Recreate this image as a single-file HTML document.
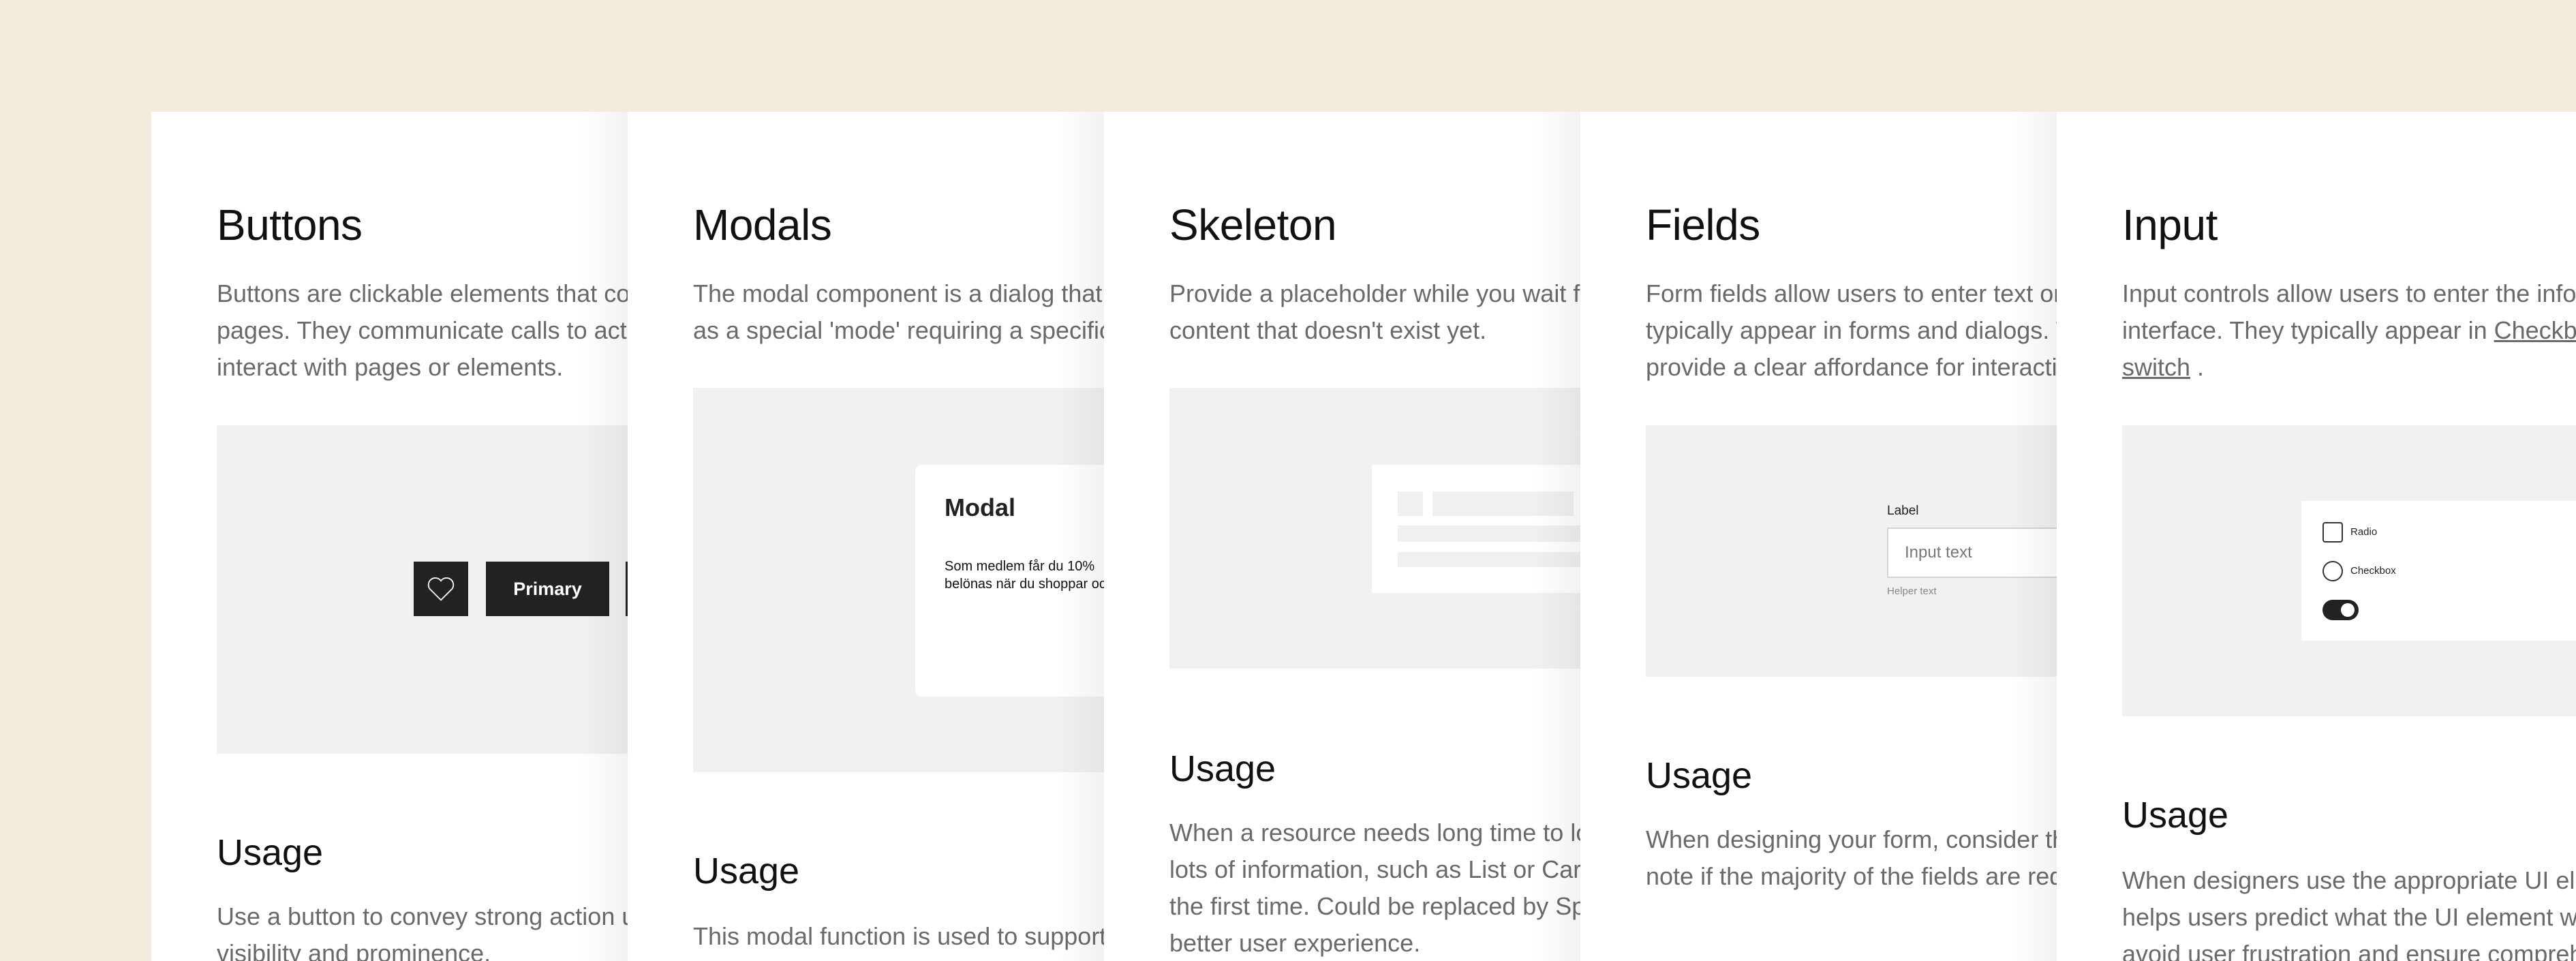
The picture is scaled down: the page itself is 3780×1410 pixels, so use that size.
<!DOCTYPE html>
<html style="overflow:hidden;width:3780px;height:1410px"><head><meta charset="utf-8"><style>
*{margin:0;padding:0;box-sizing:border-box}
body{width:3780px;height:1410px;background:#f3ebdb;overflow:hidden;position:relative;font-family:"Liberation Sans",sans-serif}
.card{position:absolute;top:164px;width:1100px;height:1246px;background:#fff}
.clip{position:absolute;inset:0;overflow:hidden}
.sh{position:absolute;left:-70px;top:0;width:70px;height:1246px;background:linear-gradient(to left,rgba(0,0,0,0.05),rgba(0,0,0,0))}
.t{position:absolute;left:96px;top:126px;font-size:64px;line-height:80px;color:#111;white-space:nowrap;letter-spacing:-0.5px}
.b{position:absolute;left:96px;font-size:36px;line-height:54px;color:#6a6a6a;white-space:nowrap}
.u{position:absolute;left:96px;font-size:54px;line-height:70px;color:#111;white-space:nowrap}
.g{position:absolute;left:96px;width:1100px;background:#f1f1f1;overflow:hidden}
.a{position:absolute}
</style></head><body>

<div class="card" style="left:222px;z-index:1"><div class="clip">
<div class="t">Buttons</div>
<div class="b" style="top:240px">Buttons are clickable elements that communicate<br>pages. They communicate calls to action<br>interact with pages or elements.</div>
<div class="g" style="top:460px;height:482px">
 <div class="a" style="left:289px;top:200px;width:80px;height:80px;background:#222;display:flex;align-items:center;justify-content:center">
  <svg width="44" height="40" viewBox="0 0 24 22"><path d="M12 20 L3 11 A5 5 0 0 1 12 4.5 A5 5 0 0 1 21 11 Z" fill="none" stroke="#fff" stroke-width="1"/></svg></div>
 <div class="a" style="left:395px;top:200px;width:181px;height:80px;background:#222;color:#fff;font-weight:bold;font-size:27px;line-height:80px;text-align:center">Primary</div>
 <div class="a" style="left:600px;top:200px;width:181px;height:80px;background:#222"></div>
</div>
<div class="u" style="top:1052px">Usage</div>
<div class="b" style="top:1154px">Use a button to convey strong action usage<br>visibility and prominence.</div>
</div></div>

<div class="card" style="left:921px;z-index:2"><div class="sh"></div><div class="clip">
<div class="t">Modals</div>
<div class="b" style="top:240px">The modal component is a dialog that<br>as a special 'mode' requiring a specific</div>
<div class="g" style="top:405px;height:564px">
 <div class="a" style="left:326px;top:113px;width:800px;height:340px;background:#fff;border-radius:10px">
  <div class="a" style="left:43px;top:40px;font-size:36px;font-weight:bold;color:#222;line-height:46px">Modal</div>
  <div class="a" style="left:43px;top:136px;font-size:20px;line-height:26px;color:#111;white-space:nowrap">Som medlem får du 10%<br>belönas när du shoppar och</div>
 </div>
</div>
<div class="u" style="top:1079px">Usage</div>
<div class="b" style="top:1183px">This modal function is used to support</div>
</div></div>

<div class="card" style="left:1620px;z-index:3"><div class="sh"></div><div class="clip">
<div class="t">Skeleton</div>
<div class="b" style="top:240px">Provide a placeholder while you wait for<br>content that doesn't exist yet.</div>
<div class="g" style="top:405px;height:412px">
 <div class="a" style="left:297px;top:113px;width:800px;height:188px;background:#fff">
  <div class="a" style="left:38px;top:39px;width:37px;height:36px;background:#f0f0f0"></div>
  <div class="a" style="left:89px;top:39px;width:207px;height:36px;background:#f0f0f0"></div>
  <div class="a" style="left:38px;top:89px;width:800px;height:24px;background:#f0f0f0"></div>
  <div class="a" style="left:38px;top:128px;width:800px;height:22px;background:#f0f0f0"></div>
 </div>
</div>
<div class="u" style="top:929px">Usage</div>
<div class="b" style="top:1031px">When a resource needs long time to load<br>lots of information, such as List or Card<br>the first time. Could be replaced by Spinner<br>better user experience.</div>
</div></div>

<div class="card" style="left:2319px;z-index:4"><div class="sh"></div><div class="clip">
<div class="t">Fields</div>
<div class="b" style="top:240px">Form fields allow users to enter text or<br>typically appear in forms and dialogs. They<br>provide a clear affordance for interaction</div>
<div class="g" style="top:460px;height:369px">
 <div class="a" style="left:354px;top:114px;font-size:19px;line-height:24px;color:#222">Label</div>
 <div class="a" style="left:354px;top:150px;width:600px;height:74px;background:#fff;border:2px solid #d4d4d4">
  <div class="a" style="left:24px;top:0;font-size:24px;line-height:70px;color:#777">Input text</div></div>
 <div class="a" style="left:354px;top:234px;font-size:15px;line-height:20px;color:#888">Helper text</div>
</div>
<div class="u" style="top:939px">Usage</div>
<div class="b" style="top:1041px">When designing your form, consider the<br>note if the majority of the fields are required</div>
</div></div>

<div class="card" style="left:3018px;z-index:5;width:762px"><div class="sh"></div><div class="clip">
<div class="t">Input</div>
<div class="b" style="top:240px">Input controls allow users to enter the information<br>interface. They typically appear in <span style="text-decoration:underline">Checkbox</span><br><span style="text-decoration:underline">switch</span> .</div>
<div class="g" style="top:460px;height:427px">
 <div class="a" style="left:263px;top:111px;width:800px;height:205px;background:#fff">
  <div class="a" style="left:31px;top:31px;width:30px;height:30px;border:2px solid #333;border-radius:4px"></div>
  <div class="a" style="left:72px;top:34px;font-size:15px;line-height:24px;color:#222">Radio</div>
  <div class="a" style="left:31px;top:88px;width:30px;height:30px;border:2px solid #333;border-radius:50%"></div>
  <div class="a" style="left:72px;top:91px;font-size:15px;line-height:24px;color:#222">Checkbox</div>
  <div class="a" style="left:31px;top:145px;width:53px;height:30px;background:#222;border-radius:15px"><div class="a" style="left:27px;top:5px;width:20px;height:20px;background:#fff;border-radius:50%"></div></div>
 </div>
</div>
<div class="u" style="top:997px">Usage</div>
<div class="b" style="top:1101px">When designers use the appropriate UI elements<br>helps users predict what the UI element will<br>avoid user frustration and ensure comprehension</div>
</div></div>

</body></html>
